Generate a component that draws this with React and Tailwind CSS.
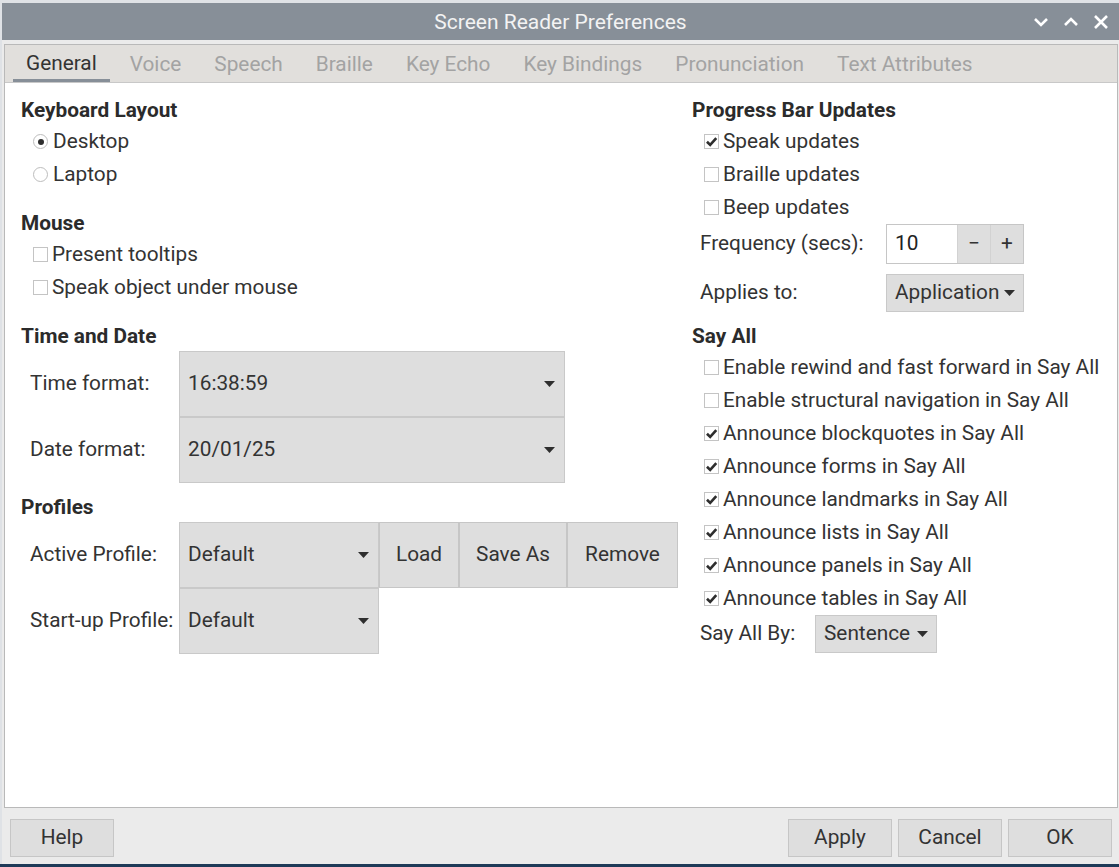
import React from 'react';

const tabs = ['General', 'Voice', 'Speech', 'Braille', 'Key Echo', 'Key Bindings', 'Pronunciation', 'Text Attributes'];

const sayAll = [
  ['Enable rewind and fast forward in Say All', false],
  ['Enable structural navigation in Say All', false],
  ['Announce blockquotes in Say All', true],
  ['Announce forms in Say All', true],
  ['Announce landmarks in Say All', true],
  ['Announce lists in Say All', true],
  ['Announce panels in Say All', true],
  ['Announce tables in Say All', true],
];

function Check({ checked, label }) {
  return (
    <div className="flex h-[33px] items-center">
      <div className="flex h-[15px] w-[15px] items-center justify-center border border-[#c4c4c4] bg-white">
        {checked && (
          <svg width="13" height="13" viewBox="0 0 12 12">
            <path d="M1.8 6.2 L4.8 9.2 L10.4 2.8" fill="none" stroke="#2e2e2e" strokeWidth="2.4" />
          </svg>
        )}
      </div>
      <span className="ml-[4px]">{label}</span>
    </div>
  );
}

function Radio({ checked, label }) {
  return (
    <div className="flex h-[33px] items-center">
      <div className="flex h-[15px] w-[15px] items-center justify-center rounded-full border border-[#bdbdbd] bg-white">
        {checked && <div className="h-[6px] w-[6px] rounded-full bg-[#2e2e2e]" />}
      </div>
      <span className="ml-[5px]">{label}</span>
    </div>
  );
}

function Arrow() {
  return (
    <svg width="11" height="6" viewBox="0 0 11 6">
      <path d="M0 0 H11 L5.5 6 Z" fill="#2e2e2e" />
    </svg>
  );
}

function Combo({ value, className }) {
  return (
    <div className={`flex items-center justify-between border border-[#c9c9c9] bg-[#dedede] pl-[8px] pr-[9px] ${className}`}>
      <span>{value}</span>
      <Arrow />
    </div>
  );
}

function Heading({ children }) {
  return <div className="flex h-[28px] items-center font-bold text-[#2b2b2b]">{children}</div>;
}

function Button({ children, className }) {
  return (
    <div className={`flex items-center justify-center border border-[#c6c6c6] bg-[#dedede] ${className}`}>
      {children}
    </div>
  );
}

export default function App() {
  return (
    <div className="flex h-[867px] w-[1119px] flex-col bg-[#dfe2e6] text-[20.8px] text-[#333333]" style={{ fontFamily: 'Roboto, "Liberation Sans", sans-serif' }}>
      <div className="ml-[2px] mt-[3px] flex h-[861px] w-[1117px] flex-col bg-[#ebebeb]">
        {/* title bar */}
        <div className="relative flex h-[37px] items-center justify-center bg-[#878f98] pt-[2px] text-[#f3f3f3]">
          <span className="text-[21px]">Screen Reader Preferences</span>
          <div className="absolute right-[10px] top-0 flex h-full items-center gap-[14px]">
            <svg width="16" height="16" viewBox="0 0 16 16">
              <path d="M2 5 L8 11 L14 5" fill="none" stroke="#fff" strokeWidth="2.6" />
            </svg>
            <svg width="16" height="16" viewBox="0 0 16 16">
              <path d="M2 11 L8 5 L14 11" fill="none" stroke="#fff" strokeWidth="2.6" />
            </svg>
            <svg width="16" height="16" viewBox="0 0 16 16">
              <path d="M2 2 L14 14 M14 2 L2 14" fill="none" stroke="#fff" strokeWidth="2.6" />
            </svg>
          </div>
        </div>

        {/* notebook */}
        <div className="ml-[2px] mr-[1px] mt-[4px] flex h-[764px] flex-col border border-[#b9b9b9] bg-white">
          <div className="flex h-[38px] items-end border-b border-[#c8c8c8] bg-[#e1dfdc] pl-[8px]">
            {tabs.map((t, i) => (
              <div
                key={t}
                className={`mr-[7px] flex h-[38px] items-center px-[13px] ${
                  i === 0 ? 'border-b-[3px] border-[#878f98] pt-[5px] text-[#333333]' : 'pt-[4px] text-[#a3a3a3]'
                }`}
              >
                {t}
              </div>
            ))}
          </div>

          <div className="flex flex-1 pt-[14px]">
            {/* left column */}
            <div className="w-[687px] pl-[16px]">
              <Heading>Keyboard Layout</Heading>
              <div className="pl-[12px]">
                <Radio checked label="Desktop" />
                <Radio label="Laptop" />
              </div>
              <div className="mt-[19px]">
                <Heading>Mouse</Heading>
              </div>
              <div className="pl-[12px]">
                <Check label="Present tooltips" />
                <Check label="Speak object under mouse" />
              </div>
              <div className="mt-[19px]">
                <Heading>Time and Date</Heading>
              </div>
              <div className="flex">
                <div className="flex w-[158px] items-center pl-[9px]">Time format:</div>
                <Combo value="16:38:59" className="h-[66px] w-[386px]" />
              </div>
              <div className="flex">
                <div className="flex w-[158px] items-center pl-[9px]">Date format:</div>
                <Combo value="20/01/25" className="h-[66px] w-[386px]" />
              </div>
              <div className="mt-[11px]">
                <Heading>Profiles</Heading>
              </div>
              <div className="flex">
                <div className="flex w-[158px] items-center pl-[9px]">Active Profile:</div>
                <Combo value="Default" className="h-[66px] w-[200px]" />
                <Button className="h-[66px] w-[80px]">Load</Button>
                <Button className="h-[66px] w-[108px]">Save As</Button>
                <Button className="h-[66px] w-[111px]">Remove</Button>
              </div>
              <div className="flex">
                <div className="flex w-[158px] items-center pl-[9px]">Start-up Profile:</div>
                <Combo value="Default" className="h-[66px] w-[200px]" />
              </div>
            </div>

            {/* right column */}
            <div className="flex-1">
              <Heading>Progress Bar Updates</Heading>
              <div className="pl-[12px]">
                <Check checked label="Speak updates" />
                <Check label="Braille updates" />
                <Check label="Beep updates" />
              </div>
              <div className="flex h-[40px] items-center pl-[8px]">
                <div className="w-[186px]">Frequency (secs):</div>
                <div className="flex h-[40px] w-[138px] border border-[#c6c6c6]">
                  <div className="flex flex-1 items-center bg-white pl-[8px] text-[#222]">10</div>
                  <div className="flex w-[33px] items-center justify-center border-l border-[#d2d2d2] bg-[#dedede]">−</div>
                  <div className="flex w-[33px] items-center justify-center border-l border-[#d2d2d2] bg-[#dedede]">+</div>
                </div>
              </div>
              <div className="mt-[10px] flex h-[38px] items-center pl-[8px]">
                <div className="w-[186px]">Applies to:</div>
                <Combo value="Application" className="h-[38px] w-[138px] !pr-[8px]" />
              </div>
              <div className="mt-[11px]">
                <Heading>Say All</Heading>
              </div>
              <div className="pl-[12px]">
                {sayAll.map(([l, c]) => (
                  <Check key={l} checked={c} label={l} />
                ))}
              </div>
              <div className="flex h-[38px] items-center pl-[8px]">
                <div className="w-[115px]">Say All By:</div>
                <Combo value="Sentence" className="h-[38px] w-[122px] !pr-[8px]" />
              </div>
            </div>
          </div>
        </div>

        {/* bottom buttons */}
        <div className="flex flex-1 items-center justify-between pl-[8px] pr-[7px] pt-[4px]">
          <Button className="h-[38px] w-[104px]">Help</Button>
          <div className="flex gap-[6px]">
            <Button className="h-[38px] w-[104px]">Apply</Button>
            <Button className="h-[38px] w-[104px]">Cancel</Button>
            <Button className="h-[38px] w-[104px]">OK</Button>
          </div>
        </div>
      </div>
      <div className="flex-1 bg-[#1e3a58]" />
    </div>
  );
}
